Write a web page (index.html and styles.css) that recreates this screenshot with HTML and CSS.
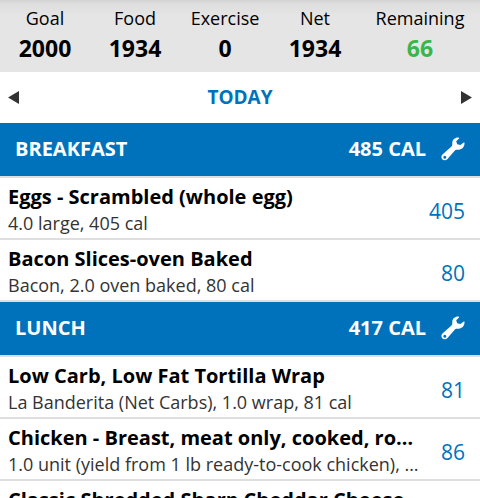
FILE: index.html
```html
<!DOCTYPE html>
<html lang="en">
<head>
<meta charset="utf-8">
<meta name="viewport" content="width=device-width, initial-scale=1">
<title>Food Diary</title>
<link rel="stylesheet" href="styles.css">
</head>
<body>
<svg class="symbols" aria-hidden="true">
  <symbol id="wrench" viewBox="0 0 24 24">
    <path fill-rule="evenodd" d="M17.600 0.600 C14.300 0.300 11.300 2.700 11.300 6 C11.300 7.600 11.400 8.600 10.500 9.600 L1.700 17.300 C0.200 18.600 0 20.800 1.200 22.200 C2.600 23.800 5 23.600 6.300 22.200 L13.900 13.600 C14.800 12.600 16 12.800 17.700 12.700 C21 12.600 23.700 9.600 23.500 6 L23.100 5.300 L19.400 8 L16.200 7.300 L15.200 4.200 L18.300 1.300 Z M3.800 18.800 A1.500 1.500 0 1 1 3.800 21.800 A1.500 1.500 0 1 1 3.800 18.800 Z"/>
  </symbol>
</svg>
<main class="diary">
  <dl class="summary">
    <div class="stat"><dt>Goal</dt><dd>2000</dd></div>
    <div class="stat"><dt>Food</dt><dd>1934</dd></div>
    <div class="stat"><dt>Exercise</dt><dd>0</dd></div>
    <div class="stat"><dt>Net</dt><dd>1934</dd></div>
    <div class="stat stat-remaining"><dt>Remaining</dt><dd>66</dd></div>
  </dl>
  <nav class="date-bar">
    <button class="arrow" type="button" aria-label="Previous day"><svg viewBox="0 0 11 13"><path d="M11 0V13L0 6.500Z"/></svg></button>
    <button class="date" type="button">TODAY</button>
    <button class="arrow" type="button" aria-label="Next day"><svg viewBox="0 0 11 13"><path d="M0 0V13L11 6.500Z"/></svg></button>
  </nav>
  <section>
    <header class="meal">
      <h2>BREAKFAST</h2>
      <span class="total">485 CAL</span>
      <button class="tools" type="button" aria-label="Breakfast tools"><svg><use href="#wrench"/></svg></button>
    </header>
    <ul class="foods">
      <li class="food"><div class="info"><h3>Eggs - Scrambled (whole egg)</h3><p>4.0 large, 405 cal</p></div><span class="calories">405</span></li>
      <li class="food"><div class="info"><h3>Bacon Slices-oven Baked</h3><p>Bacon, 2.0 oven baked, 80 cal</p></div><span class="calories">80</span></li>
    </ul>
  </section>
  <section>
    <header class="meal">
      <h2>LUNCH</h2>
      <span class="total">417 CAL</span>
      <button class="tools" type="button" aria-label="Lunch tools"><svg><use href="#wrench"/></svg></button>
    </header>
    <ul class="foods">
      <li class="food"><div class="info"><h3>Low Carb, Low Fat Tortilla Wrap</h3><p>La Banderita (Net Carbs), 1.0 wrap, 81 cal</p></div><span class="calories">81</span></li>
      <li class="food"><div class="info"><h3>Chicken - Breast, meat only, cooked, roasted</h3><p>1.0 unit (yield from 1 lb ready-to-cook chicken), 86 cal</p></div><span class="calories">86</span></li>
      <li class="food"><div class="info"><h3>Classic Shredded Sharp Cheddar Cheese</h3></div></li>
    </ul>
  </section>
</main>
</body>
</html>
```

FILE: styles.css
```css
* { box-sizing: border-box; }
body, dl, dd, h2, h3, p, ul { margin: 0; padding: 0; }
body {
  font-family: "Open Sans", "Noto Sans", sans-serif;
  background: #fff;
  color: #000;
}
button {
  padding: 0;
  border: 0;
  background: none;
  color: inherit;
  font: inherit;
  cursor: pointer;
}
svg { display: block; fill: currentColor; }
.symbols { display: none; }
.diary { height: 100vh; overflow: hidden; }

.summary {
  display: flex;
  padding: 5px 0 7px;
  background: linear-gradient(#d2d2d2, #dedede 4px, #e5e5e5 16px);
  text-align: center;
}
.stat { flex: 3 1 0; }
.stat-remaining { flex-grow: 4; }
.stat dt { font-size: 18px; line-height: 26px; }
.stat dd { font-size: 23px; line-height: 34px; font-weight: 700; }
.stat-remaining dd { color: #39b54a; }

.date-bar {
  display: flex;
  align-items: center;
  justify-content: space-between;
  padding: 10px 8px 11px;
}
.date { color: #0072bc; font-size: 19px; line-height: 30px; font-weight: 700; }
.arrow { color: #333; }
.arrow svg { width: 11px; height: 13px; }

.meal {
  display: flex;
  align-items: center;
  padding: 11px 15px 12px;
  border-bottom: 2px solid #dedede;
  background: #0072bc;
  color: #fff;
  font-size: 20px;
  line-height: 30px;
  font-weight: 700;
}
.meal h2 { flex: 1; font-size: inherit; }
.tools { margin-left: 15px; }
.tools svg { width: 24px; height: 24px; }

.foods { list-style: none; }
.food {
  display: flex;
  align-items: center;
  gap: 8px;
  padding: 6px 15px 2px 8px;
  border-bottom: 2px solid #dedede;
}
.info { flex: 1; min-width: 0; }
.info h3, .info p { overflow: hidden; white-space: nowrap; text-overflow: ellipsis; }
.info h3 { font-size: 20px; line-height: 26px; font-weight: 700; }
.info p { color: #333; font-size: 18px; line-height: 26px; }
.calories { min-width: 36px; padding-top: 2px; color: #0072bc; font-size: 21px; line-height: 30px; text-align: right; }
```
